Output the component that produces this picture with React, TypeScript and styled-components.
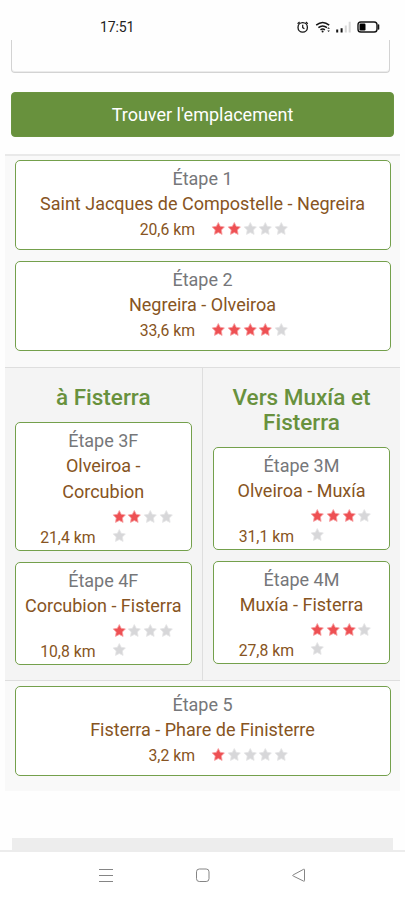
import React from "react";
import styled, { createGlobalStyle } from "styled-components";

const GlobalStyle = createGlobalStyle`
  * { box-sizing: border-box; }
  body { margin: 0; background: #fff; font-family: Roboto, sans-serif; }
`;

const Phone = styled.div`
  width: 405px;
  height: 900px;
  overflow: hidden;
  display: flex;
  flex-direction: column;
  background: #fefefe;
`;

const StatusBar = styled.header`
  height: 40px;
  flex: none;
  padding: 14px 24px 0 100px;
  display: flex;
  justify-content: space-between;
  align-items: flex-start;
`;

const Clock = styled.span`
  font-size: 14px;
  line-height: 26px;
  letter-spacing: -0.15px;
  color: #222;
`;

const StatusIcons = styled.svg`
  display: block;
  width: 84px;
  height: 26px;
`;

const Page = styled.main`
  flex: 1;
  min-height: 0;
  overflow: hidden;
  display: flex;
  flex-direction: column;
`;

const SearchField = styled.div`
  flex: none;
  height: 33px;
  margin: 0 15px 0 11px;
  border: solid #d3d3d3;
  border-width: 0 1px 1px;
  border-radius: 0 0 4px 4px;
  box-shadow: inset 0 -1px 0 #ececec;
`;

const LocateButton = styled.button`
  flex: none;
  height: 45px;
  margin: 18.5px 11px 0;
  padding: 0;
  border: 1px solid #6b9440;
  border-radius: 4px;
  background: #68913d;
  color: #fff;
  font: 400 18px/43px Roboto, sans-serif;
`;

const Stages = styled.section`
  flex: none;
  margin: 17.5px 5px 0;
  height: 637px;
  background: #f9f9f9;
  border-top: 2px solid #e9e9e9;
  display: flex;
  flex-direction: column;
`;

const StageGroup = styled.div<{ $height: number; $top: number }>`
  height: ${(p) => p.$height}px;
  padding: ${(p) => p.$top}px 9.5px 0;
  display: flex;
  flex-direction: column;
  gap: 11px;
`;

const Split = styled.div`
  height: 314px;
  display: grid;
  grid-template-columns: 198px 1fr;
  background: #f4f4f4;
  border-top: 1px solid #dedede;
  border-bottom: 1px solid #dedede;
`;

const Route = styled.div<{ $divided?: boolean }>`
  padding: ${(p) => (p.$divided ? "17px 10px 0 9.5px" : "17px 10px 0 10px")};
  border-right: ${(p) => (p.$divided ? "1px solid #dedede" : "none")};
  display: flex;
  flex-direction: column;
  gap: 11px;
`;

const RouteTitle = styled.h2`
  margin: 0 0 1px;
  font-size: 22.5px;
  line-height: 25px;
  font-weight: 500;
  text-align: center;
  color: #68913d;
  white-space: nowrap;
`;

const Card = styled.article<{ $height: number }>`
  flex: none;
  height: ${(p) => p.$height}px;
  padding-top: 4.6px;
  border: 1px solid #74a04c;
  border-radius: 5px;
  background: #fff;
  text-align: center;
  font-size: 18px;
  line-height: 25.6px;
`;

const StageNumber = styled.div`
  color: #76777a;
`;

const StageName = styled.div`
  color: #875422;
`;

const Facts = styled.div<{ $narrow?: boolean }>`
  display: grid;
  grid-template-columns: ${(p) => (p.$narrow ? "80px 64px" : "179.5px 80px")};
  column-gap: 16px;
  align-items: end;
`;

const Distance = styled.span<{ $narrow?: boolean }>`
  margin-bottom: ${(p) => (p.$narrow ? -0.6 : -2.4)}px;
  text-align: right;
  font-size: 15.75px;
  line-height: 26px;
  color: #875422;
  white-space: nowrap;
`;

const Rating = styled.div<{ $narrow?: boolean }>`
  display: flex;
  flex-wrap: wrap;
  row-gap: 3px;
  padding-bottom: ${(p) => (p.$narrow ? 6.4 : 3.8)}px;
  padding-top: ${(p) => (p.$narrow ? 4.6 : 0)}px;
`;

const StarIcon = styled.svg`
  display: block;
  width: 15.75px;
  height: 16px;
`;

function Star({ on }: { on: boolean }) {
  return (
    <StarIcon viewBox="0 0 15.75 16">
      <path
        d="M7.3 1.5 9.2 5.3 13.4 5.9 10.4 9 11.1 13.4 7.3 11.5 3.5 13.4 4.2 9 1.2 5.9 5.4 5.3Z"
        fill={on ? "#ee5053" : "#d7d7d9"}
        stroke={on ? "#f6a0a2" : "#e4e4e6"}
        strokeWidth="0.8"
        strokeLinejoin="round"
      />
    </StarIcon>
  );
}

type StageProps = {
  id: string;
  name: React.ReactNode;
  km: string;
  stars: number;
  narrow?: boolean;
  height?: number;
};

function Stage({ id, name, km, stars, narrow, height = 90 }: StageProps) {
  return (
    <Card $height={height}>
      <StageNumber>Étape {id}</StageNumber>
      <StageName>{name}</StageName>
      <Facts $narrow={narrow}>
        <Distance $narrow={narrow}>{km} km</Distance>
        <Rating $narrow={narrow}>
          {[1, 2, 3, 4, 5].map((n) => (
            <Star key={n} on={n <= stars} />
          ))}
        </Rating>
      </Facts>
    </Card>
  );
}

const FooterBlock = styled.div`
  flex: none;
  height: 20px;
  margin: 46.5px 12px 0;
  background: #ededed;
`;

const NavBar = styled.nav`
  flex: none;
  height: 50px;
  border-top: 2px solid #ececec;
  background: #fff;
  display: flex;
  justify-content: space-between;
  padding: 14px 97px 0;
`;

const NavIcon = styled.svg`
  width: 18px;
  height: 18px;
  fill: none;
  stroke: #858585;
  stroke-width: 1;
`;

export default function App() {
  return (
    <Phone>
      <GlobalStyle />
      <StatusBar>
        <Clock>17:51</Clock>
        <StatusIcons viewBox="297 14 84 26" fill="none" stroke="#151515">
          <circle cx="302.7" cy="27.4" r="4.7" strokeWidth="1.3" />
          <path d="M302.7 24.8v2.8l1.7 1.1M297.6 23.7l2-1.7M307.8 23.7l-2-1.7" strokeWidth="1.2" />
          <path d="M316.2 25.2q6.5-5.4 13 0M318.4 27.7q4.3-3.5 8.6 0M320.5 29.9q2.2-1.7 4.4 0" strokeWidth="1.5" />
          <circle cx="322.6" cy="31.6" r="1" fill="#151515" stroke="none" />
          <path d="M327.3 28.7l1.3-1.4 1.3 1.4zM327.3 30.4l1.3 1.6 1.3-1.6z" fill="#151515" stroke="none" />
          <path d="M337.2 29.6v2.9M341.6 28.2v4.3" strokeWidth="2" />
          <path d="M345.8 25.6v6.9M349.7 21.8v10.7" stroke="#d7d7d7" strokeWidth="2" />
          <rect x="358" y="22" width="19" height="10" rx="2.8" strokeWidth="1.4" />
          <rect x="359.5" y="23.5" width="6" height="7" rx="1.2" fill="#000" stroke="none" />
          <path d="M378.5 25v4" strokeWidth="1.6" strokeLinecap="round" />
        </StatusIcons>
      </StatusBar>
      <Page>
        <SearchField />
        <LocateButton>Trouver l'emplacement</LocateButton>
        <Stages>
          <StageGroup $height={211} $top={4}>
            <Stage id="1" name="Saint Jacques de Compostelle - Negreira" km="20,6" stars={2} />
            <Stage id="2" name="Negreira - Olveiroa" km="33,6" stars={4} />
          </StageGroup>
          <Split>
            <Route $divided>
              <RouteTitle>à Fisterra</RouteTitle>
              <Stage id="3F" name={<>Olveiroa -<br />Corcubion</>} km="21,4" stars={2} narrow height={129} />
              <Stage id="4F" name="Corcubion - Fisterra" km="10,8" stars={1} narrow height={103} />
            </Route>
            <Route>
              <RouteTitle>Vers Muxía et<br />Fisterra</RouteTitle>
              <Stage id="3M" name="Olveiroa - Muxía" km="31,1" stars={3} narrow height={103} />
              <Stage id="4M" name="Muxía - Fisterra" km="27,8" stars={3} narrow height={103} />
            </Route>
          </Split>
          <StageGroup $height={110} $top={5}>
            <Stage id="5" name="Fisterra - Phare de Finisterre" km="3,2" stars={1} />
          </StageGroup>
        </Stages>
        <FooterBlock />
      </Page>
      <NavBar>
        <NavIcon viewBox="0 0 18 18">
          <path d="M2 3.5h14M2 9.5h14M2 15.5h14" />
        </NavIcon>
        <NavIcon viewBox="0 0 18 18">
          <rect x="2.5" y="3" width="12.5" height="12.5" rx="2.8" />
        </NavIcon>
        <NavIcon viewBox="0 0 18 18">
          <path d="M14.5 3.8v10.8q0 1-.9.5L3.2 10q-1.1-.6 0-1.1l10.4-5.6q.9-.5.9.5Z" />
        </NavIcon>
      </NavBar>
    </Phone>
  );
}
